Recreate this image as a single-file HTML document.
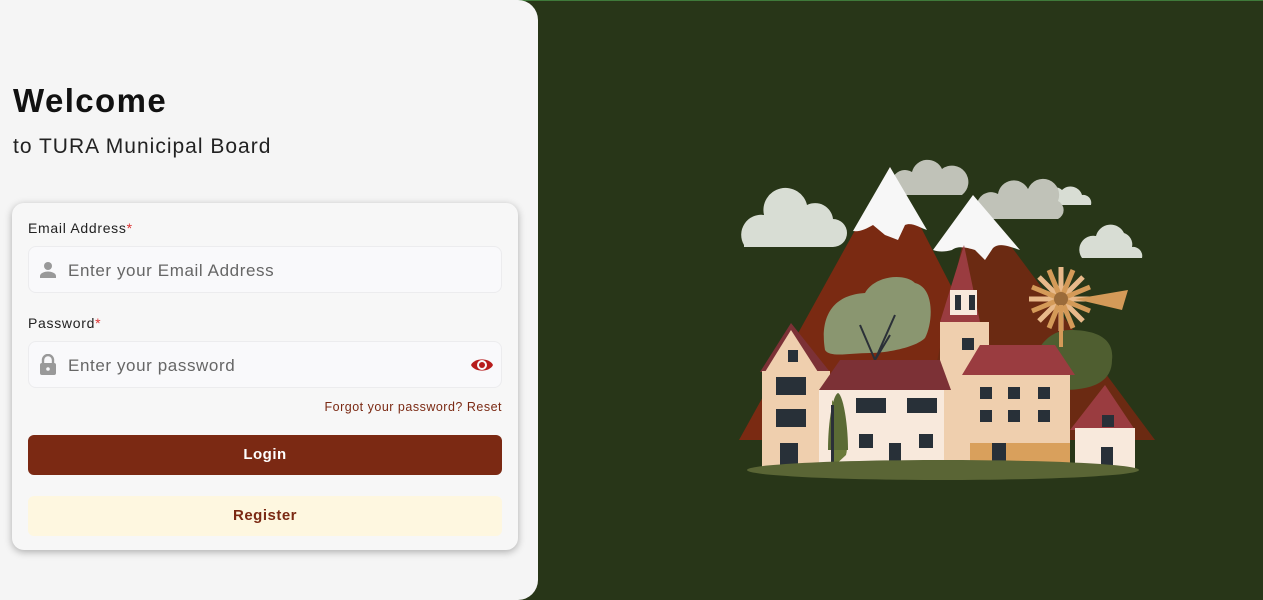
<!DOCTYPE html>
<html><head><meta charset="utf-8"><style>
*{box-sizing:border-box;margin:0;padding:0}
body{width:1263px;height:600px;background:#283618;font-family:"Liberation Sans",sans-serif;position:relative;overflow:hidden}
.topline{position:absolute;left:0;top:0;width:1263px;height:1px;background:#3f7a3a}
.left{position:absolute;left:0;top:0;width:538px;height:600px;background:#f5f5f5;border-radius:0 20px 20px 0}
h1{position:absolute;left:13px;top:82px;font-size:33px;font-weight:bold;color:#111;letter-spacing:1.4px}
.sub{position:absolute;left:13px;top:135px;font-size:21px;color:#222;letter-spacing:1px}
.card{position:absolute;left:12px;top:203px;width:506px;height:347px;background:#f7f7f7;border-radius:12px;box-shadow:0 2px 8px rgba(0,0,0,.3)}
.lbl{position:absolute;left:16px;font-size:14px;color:#222;letter-spacing:.7px}
.lbl span{color:#d33}
.inp{position:absolute;left:16px;width:474px;height:47px;background:#f9f9fb;border:1px solid #ececee;border-radius:8px}
.ph{position:absolute;left:39px;top:14px;font-size:17px;color:#666;letter-spacing:.6px}
.forgot{position:absolute;right:16px;top:197px;font-size:12.5px;color:#7b2a14;letter-spacing:.5px}
.login{position:absolute;left:16px;top:232px;width:474px;height:40px;background:#7b2913;border-radius:6px;color:#fff;font-weight:bold;font-size:15px;text-align:center;line-height:40px;letter-spacing:.5px}
.reg{position:absolute;left:16px;top:293px;width:474px;height:40px;background:#fef7e0;border-radius:6px;color:#7b2913;font-weight:bold;font-size:15px;text-align:center;line-height:40px;letter-spacing:.5px}
svg.ill{position:absolute;left:730px;top:150px}
</style></head><body>
<div class="topline"></div>
<div class="left">
<h1>Welcome</h1>
<div class="sub">to TURA Municipal Board</div>
<div class="card">
<div class="lbl" style="top:17px">Email Address<span>*</span></div>
<div class="inp" style="top:43px">
<svg style="position:absolute;left:10px;top:14px" width="18" height="18" viewBox="0 0 18 18"><circle cx="9" cy="5" r="4" fill="#999"/><path d="M1 17v-2c0-3 5-4.5 8-4.5s8 1.5 8 4.5v2z" fill="#999"/></svg>
<div class="ph">Enter your Email Address</div></div>
<div class="lbl" style="top:112px">Password<span>*</span></div>
<div class="inp" style="top:138px">
<svg style="position:absolute;left:10px;top:12px" width="18" height="22" viewBox="0 0 18 22"><path d="M4 9V6a5 5 0 0110 0v3" stroke="#999" stroke-width="2.4" fill="none"/><rect x="1" y="9" width="16" height="12" rx="2" fill="#999"/><circle cx="9" cy="15" r="1.8" fill="#f9f9fb"/></svg>
<div class="ph">Enter your password</div>
<svg style="position:absolute;right:7px;top:14px" width="24" height="18" viewBox="0 0 24 18"><path d="M1 9C4.5 1.5 19.5 1.5 23 9C19.5 16.5 4.5 16.5 1 9z" fill="#b71c1c"/><circle cx="12" cy="9" r="5" fill="#f9f9fb"/><circle cx="12" cy="9" r="3" fill="#b71c1c"/></svg>
</div>
<div class="forgot">Forgot your password? Reset</div>
<div class="login">Login</div>
<div class="reg">Register</div>
</div>
</div>
<svg class="ill" width="430" height="340" viewBox="0 0 430 340">
<g fill="#d8ddd4"><path d="M14 95a20 20 0 0 1 20-30a22 22 0 0 1 43-10a18 18 0 0 1 26 14a14 14 0 0 1 0 28H14z"/><path d="M352 108a14 14 0 0 1 14-22a15 15 0 0 1 28-3a12 12 0 0 1 8 14a9 9 0 0 1 10 11z"/><path d="M318 55a10 10 0 0 1 14-15a12 12 0 0 1 20 5a8 8 0 0 1 9 10z"/></g>
<g fill="#c0c2b8"><path d="M168 45a12 12 0 0 1 14-23a16 16 0 0 1 30-3a14 14 0 0 1 20 26z"/><path d="M254 69a14 14 0 0 1 14-25a16 16 0 0 1 30-5a15 15 0 0 1 30 12a10 10 0 0 1 0 18z"/></g>
<polygon points="9,290 160,17 300,290" fill="#7a2a12"/>
<polygon points="190,290 243,45 425,290" fill="#6b2a12"/>
<path d="M123 81L160 17L197 80C190 78 182 72 175 75L168 90L155 85L143 75C136 79 130 82 123 81z" fill="#f7f7f7"/>
<path d="M203 100L243 45L290 100C280 97 270 92 263 98L255 110L245 100C238 98 228 95 222 100C215 102 208 102 203 100z" fill="#f7f7f7"/>
<path d="M95 200c-5-30 5-55 40-57c10-18 40-20 50-10c20 5 18 40 10 55c-10 10-40 15-55 15c-20 0-40 5-45-3z" fill="#8a9670"/>
<path d="M145 210L130 175M145 210L165 165M145 210L160 185" stroke="#2b3038" stroke-width="2"/>
<path d="M300 235c0-30 15-55 40-55c20 0 45 5 42 30c0 25-25 30-50 30z" fill="#4f5e30"/>
<g stroke="#e8b98a" stroke-width="5"><path d="M331 149l0-32M331 149l22-22M331 149l32 0M331 149l22 22M331 149l0 32M331 149l-22 22M331 149l-32 0M331 149l-22-22"/></g>
<g stroke="#d49a58" stroke-width="5"><path d="M331 149l12-29M331 149l29-12M331 149l29 12M331 149l12 29M331 149l-12 29M331 149l-29 12M331 149l-29-12M331 149l-12-29"/></g>
<polygon points="345,149 398,140 392,160" fill="#d49a58"/>
<circle cx="331" cy="149" r="7" fill="#9b6b3a"/>
<rect x="329" y="155" width="4" height="42" fill="#d49a58"/>
<polygon points="30,222 61,173 100,222" fill="#7c3136"/>
<rect x="32" y="221" width="68" height="97" fill="#efcfae"/>
<polygon points="35,222 61,180 88,222" fill="#efcfae"/>
<polygon points="210,172 234,95 250,172" fill="#9a3c40"/>
<rect x="210" y="172" width="49" height="146" fill="#efcfae"/>
<rect x="220" y="140" width="27" height="25" fill="#f8e9dc"/>
<polygon points="89,240 110,210 210,210 221,240" fill="#7c3136"/>
<rect x="89" y="240" width="125" height="78" fill="#f8e9dc"/>
<polygon points="232,225 250,195 325,195 345,225" fill="#9a3c40"/>
<rect x="240" y="225" width="100" height="93" fill="#efcfae"/>
<rect x="240" y="293" width="100" height="25" fill="#d9a05c"/>
<polygon points="340,280 375,235 405,280" fill="#9a3c40"/>
<rect x="345" y="278" width="60" height="40" fill="#f8e9dc"/>
<g fill="#283038"><rect x="46" y="227" width="30" height="18"/><rect x="46" y="259" width="30" height="18"/><rect x="50" y="293" width="18" height="25"/><rect x="58" y="200" width="10" height="12"/><rect x="126" y="248" width="30" height="15"/><rect x="177" y="248" width="30" height="15"/><rect x="129" y="284" width="14" height="14"/><rect x="189" y="284" width="14" height="14"/><rect x="159" y="293" width="12" height="25"/><rect x="232" y="188" width="12" height="12"/><rect x="250" y="237" width="12" height="12"/><rect x="278" y="237" width="12" height="12"/><rect x="308" y="237" width="12" height="12"/><rect x="250" y="260" width="12" height="12"/><rect x="278" y="260" width="12" height="12"/><rect x="308" y="260" width="12" height="12"/><rect x="262" y="293" width="14" height="25"/><rect x="372" y="265" width="12" height="12"/><rect x="371" y="297" width="12" height="21"/><rect x="225" y="145" width="6" height="15"/><rect x="239" y="145" width="6" height="15"/></g>
<path d="M102 318V250c10 15 18 40 14 55" fill="#6b7a3a"/>
<path d="M98 300c0-30 5-55 10-57c5 2 10 30 10 57z" fill="#5b6b35"/>
<rect x="101" y="255" width="3" height="63" fill="#2b3038"/>
<ellipse cx="213" cy="320" rx="196" ry="10" fill="#5a6535"/>
</svg>
</body></html>
